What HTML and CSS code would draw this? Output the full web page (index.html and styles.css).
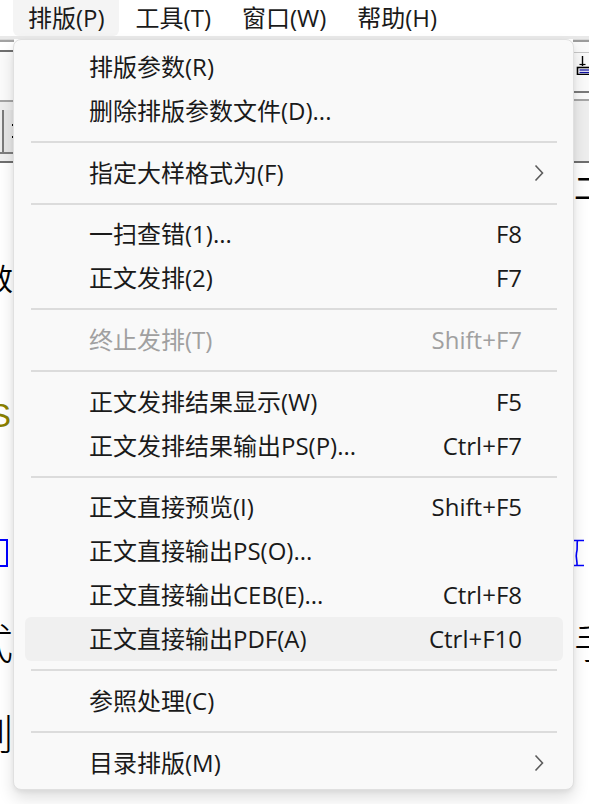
FILE: index.html
```html
<!DOCTYPE html>
<html lang="zh-CN">
<head>
<meta charset="utf-8">
<title>排版菜单</title>
<link rel="stylesheet" href="styles.css">
</head>
<body>
<div class="app">
  <div class="menubar">
    <div class="mb-item active">排版(P)</div>
    <div class="mb-item">工具(T)</div>
    <div class="mb-item">窗口(W)</div>
    <div class="mb-item">帮助(H)</div>
  </div>
  <div class="band"></div>
  <div class="chrome">
    <div class="chrome-left">
      <div class="cl c1"></div>
      <div class="cl c2"></div>
      <div class="cl c3"></div>
      <div class="cl c4"></div>
      <div class="cl c5"></div>
      <div class="cl c6"></div>
      <div class="cl c7"></div>
      <div class="cl c8"><div class="grip"><span class="dot"></span><span class="dot"></span></div></div>
      <div class="cl c9"></div>
      <div class="cl c10"></div>
      <div class="cl c11"></div>
    </div>
    <div class="chrome-right">
      <div class="cl r1"></div>
      <div class="cl r2"></div>
      <div class="cl r3"></div>
      <div class="cl r4"></div>
      <div class="cl r5">
        <svg class="tb-icon" width="15" height="20" viewBox="0 0 15 20">
          <line x1="8.5" y1="1" x2="8.5" y2="11" stroke="#000" stroke-width="1.4"/>
          <line x1="5.5" y1="9.5" x2="11.5" y2="9.5" stroke="#000" stroke-width="1.2"/>
          <rect x="3.5" y="12.5" width="13" height="7" fill="#fff" stroke="#000" stroke-width="1.6"/>
          <line x1="5.5" y1="15" x2="15" y2="15" stroke="#1010a0" stroke-width="1.3"/>
          <line x1="5.5" y1="17.5" x2="15" y2="17.5" stroke="#1010a0" stroke-width="1.3"/>
        </svg>
      </div>
      <div class="cl r6"></div>
      <div class="cl r7"></div>
      <div class="cl r8"></div>
      <div class="cl r9"></div>
      <div class="cl r10"></div>
    </div>
  </div>
  <div class="doc">
    <div class="doc-line"><span></span><span class="mid r-mid">二</span></div>
    <div class="doc-line"></div>
    <div class="doc-line"><span class="mid l-mid">效</span><span></span></div>
    <div class="doc-line"></div>
    <div class="doc-line"></div>
    <div class="doc-line"><span class="olive">S</span><span></span></div>
    <div class="doc-line"></div>
    <div class="doc-line"></div>
    <div class="doc-line"><span class="blue-box"></span>
      <svg class="blue-beam" width="12" height="28" viewBox="0 0 12 28">
        <path d="M0 1.5H11M0 26.5H11M4.5 1.5C3.5 6 5 9 3.5 14C2.5 18 4.5 22 4 26.5" fill="none" stroke="#0000ff" stroke-width="1.6"/>
      </svg>
    </div>
    <div class="doc-line"></div>
    <div class="doc-line"><span class="big l-big">式</span><span class="big r-big">手</span></div>
    <div class="doc-line"></div>
    <div class="doc-line"><span class="big l-big">刻</span><span></span></div>
    <div class="doc-line"></div>
  </div>

  <div class="menu">
    <div class="item"><span class="label">排版参数(R)</span><span class="key"></span><span class="arr"></span></div>
    <div class="item"><span class="label">删除排版参数文件(D)...</span><span class="key"></span><span class="arr"></span></div>
    <div class="sep"></div>
    <div class="item"><span class="label">指定大样格式为(F)</span><span class="key"></span>
      <span class="arr"><svg width="10" height="18" viewBox="0 0 10 18"><polyline points="1.5,1.5 8.5,9 1.5,16.5" fill="none" stroke="#5c5c5c" stroke-width="1.6" stroke-linejoin="miter"/></svg></span></div>
    <div class="sep"></div>
    <div class="item"><span class="label">一扫查错(1)...</span><span class="key">F8</span><span class="arr"></span></div>
    <div class="item"><span class="label">正文发排(2)</span><span class="key">F7</span><span class="arr"></span></div>
    <div class="sep"></div>
    <div class="item disabled"><span class="label">终止发排(T)</span><span class="key">Shift+F7</span><span class="arr"></span></div>
    <div class="sep"></div>
    <div class="item"><span class="label">正文发排结果显示(W)</span><span class="key">F5</span><span class="arr"></span></div>
    <div class="item"><span class="label">正文发排结果输出PS(P)...</span><span class="key">Ctrl+F7</span><span class="arr"></span></div>
    <div class="sep"></div>
    <div class="item"><span class="label">正文直接预览(I)</span><span class="key">Shift+F5</span><span class="arr"></span></div>
    <div class="item"><span class="label">正文直接输出PS(O)...</span><span class="key"></span><span class="arr"></span></div>
    <div class="item"><span class="label">正文直接输出CEB(E)...</span><span class="key">Ctrl+F8</span><span class="arr"></span></div>
    <div class="item hot"><span class="label">正文直接输出PDF(A)</span><span class="key">Ctrl+F10</span><span class="arr"></span></div>
    <div class="sep"></div>
    <div class="item"><span class="label">参照处理(C)</span><span class="key"></span><span class="arr"></span></div>
    <div class="sep"></div>
    <div class="item"><span class="label">目录排版(M)</span><span class="key"></span>
      <span class="arr"><svg width="10" height="18" viewBox="0 0 10 18"><polyline points="1.5,1.5 8.5,9 1.5,16.5" fill="none" stroke="#5c5c5c" stroke-width="1.6" stroke-linejoin="miter"/></svg></span></div>
  </div>
</div>
</body>
</html>
```

FILE: styles.css
```css
html, body {
  margin: 0;
  padding: 0;
  background: #ffffff;
}

.app {
  position: relative;
  width: 589px;
  height: 804px;
  overflow: hidden;
  background: #ffffff;
  font-family: "Open Sans", "Noto Sans CJK SC", sans-serif;
  color: #1a1a1a;
}

/* ---------- menu bar ---------- */
.menubar {
  display: flex;
  height: 36px;
  padding-left: 13px;
  background: #ffffff;
}

.mb-item {
  height: 36px;
  line-height: 36px;
  padding: 0 14px 0 15px;
  font-size: 24px;
  color: #1a1a1a;
  border-radius: 0 0 6px 6px;
  margin-right: 2px;
}

.mb-item.active {
  background: #f4f4f4;
}

.band {
  height: 3px;
  background: #e9e9e9;
}

/* ---------- toolbar chrome (mostly hidden under the menu) ---------- */
.chrome {
  display: flex;
  justify-content: space-between;
  height: 124px;
}

.chrome-left {
  width: 14px;
  display: flex;
  flex-direction: column;
}

.chrome-right {
  width: 16px;
  display: flex;
  flex-direction: column;
}

.cl { flex: none; }

.c1 { height: 1px; background: #d8d8d8; }
.c2 { height: 2px; background: #a2a2a2; }
.c3 { height: 8px; background: #ffffff; }
.c4 { height: 2px; background: #707070; }
.c5 { height: 48px; background: #fbfbfb; }
.c6 { height: 2px; background: #a4a4a4; }
.c7 { height: 8px; background: #eeeeee; }
.c8 {
  height: 42px;
  background: #eeeeee;
  display: flex;
}
.c9 { height: 2px; background: #7e7e7e; }
.c10 { height: 7px; background: #f0f0f0; }
.c11 { height: 2px; background: #6f6f6f; }

.grip {
  margin-left: 2px;
  width: 10px;
  border-left: 2px solid #7a7a7a;
  background: #e6e6e6;
  display: flex;
  flex-direction: column;
  align-items: flex-end;
  padding-top: 14px;
  gap: 10px;
}

.dot {
  width: 2px;
  height: 2px;
  background: #000000;
}

.r1 { height: 1px; background: #d8d8d8; }
.r2 { height: 2px; background: #9c9c9c; }
.r3 { height: 10px; background: #fafafa; }
.r4 { height: 1px; background: #c6c6c6; }
.r5 {
  height: 38px;
  background: #fafafa;
  display: flex;
  align-items: flex-start;
}
.r6 { height: 2px; background: #7a7a7a; }
.r7 { height: 6px; background: #fbfbfb; }
.r8 { height: 2px; background: #a6a6a6; }
.r9 { height: 60px; background: #eeeeee; }
.r10 { height: 2px; background: #6f6f6f; }

.tb-icon {
  display: block;
  margin-top: 2px;
  margin-left: 1px;
}

/* ---------- document ---------- */
.doc {
  display: flex;
  flex-direction: column;
}

.doc-line {
  height: 45.5px;
  flex: none;
  display: flex;
  justify-content: space-between;
  align-items: center;
  font-family: "Noto Sans CJK SC", sans-serif;
  color: #000000;
}

.mid { font-size: 30px; line-height: 1; }
.big { font-size: 42px; line-height: 1; font-weight: 300; }
.l-mid { margin-left: -17px; }
.r-mid { margin-right: -15px; }
.l-big { margin-left: -29px; }
.r-big { margin-right: -27px; }

.olive {
  font-family: "Liberation Sans", sans-serif;
  font-size: 33px;
  line-height: 1;
  color: #8a8000;
  margin-left: -11px;
  margin-top: 4px;
}

.blue-box {
  width: 22px;
  height: 24px;
  border: 2px solid #0000ff;
  margin-left: -18px;
  margin-top: 6px;
}

.blue-beam {
  display: block;
  margin-right: 4px;
  margin-top: 6px;
}

/* ---------- dropdown menu ---------- */
.menu {
  position: absolute;
  left: 13px;
  top: 39px;
  width: 561px;
  box-sizing: border-box;
  padding: 5px 10px 4px 11px;
  background: #f9f9f9;
  border: 1px solid #e0e0e0;
  border-radius: 8px;
  box-shadow: 0 8px 16px rgba(0, 0, 0, 0.13), 0 2px 4px rgba(0, 0, 0, 0.05);
  font-size: 24px;
  color: #1a1a1a;
}

.item {
  height: 44px;
  display: grid;
  grid-template-columns: 1fr auto 41px;
  align-items: center;
  padding-left: 64px;
  border-radius: 6px;
  line-height: 1;
}

.item.hot {
  background: #f0f0f0;
}

.item.disabled {
  color: #a0a0a0;
}

.label {
  white-space: nowrap;
}

.key {
  white-space: nowrap;
  text-align: right;
}

.arr {
  display: flex;
  justify-content: flex-end;
  padding-right: 19px;
}

.arr svg {
  display: block;
}

.sep {
  height: 2px;
  margin: 8px 6px 7.7px 6px;
  background: #dcdcdc;
}
```
